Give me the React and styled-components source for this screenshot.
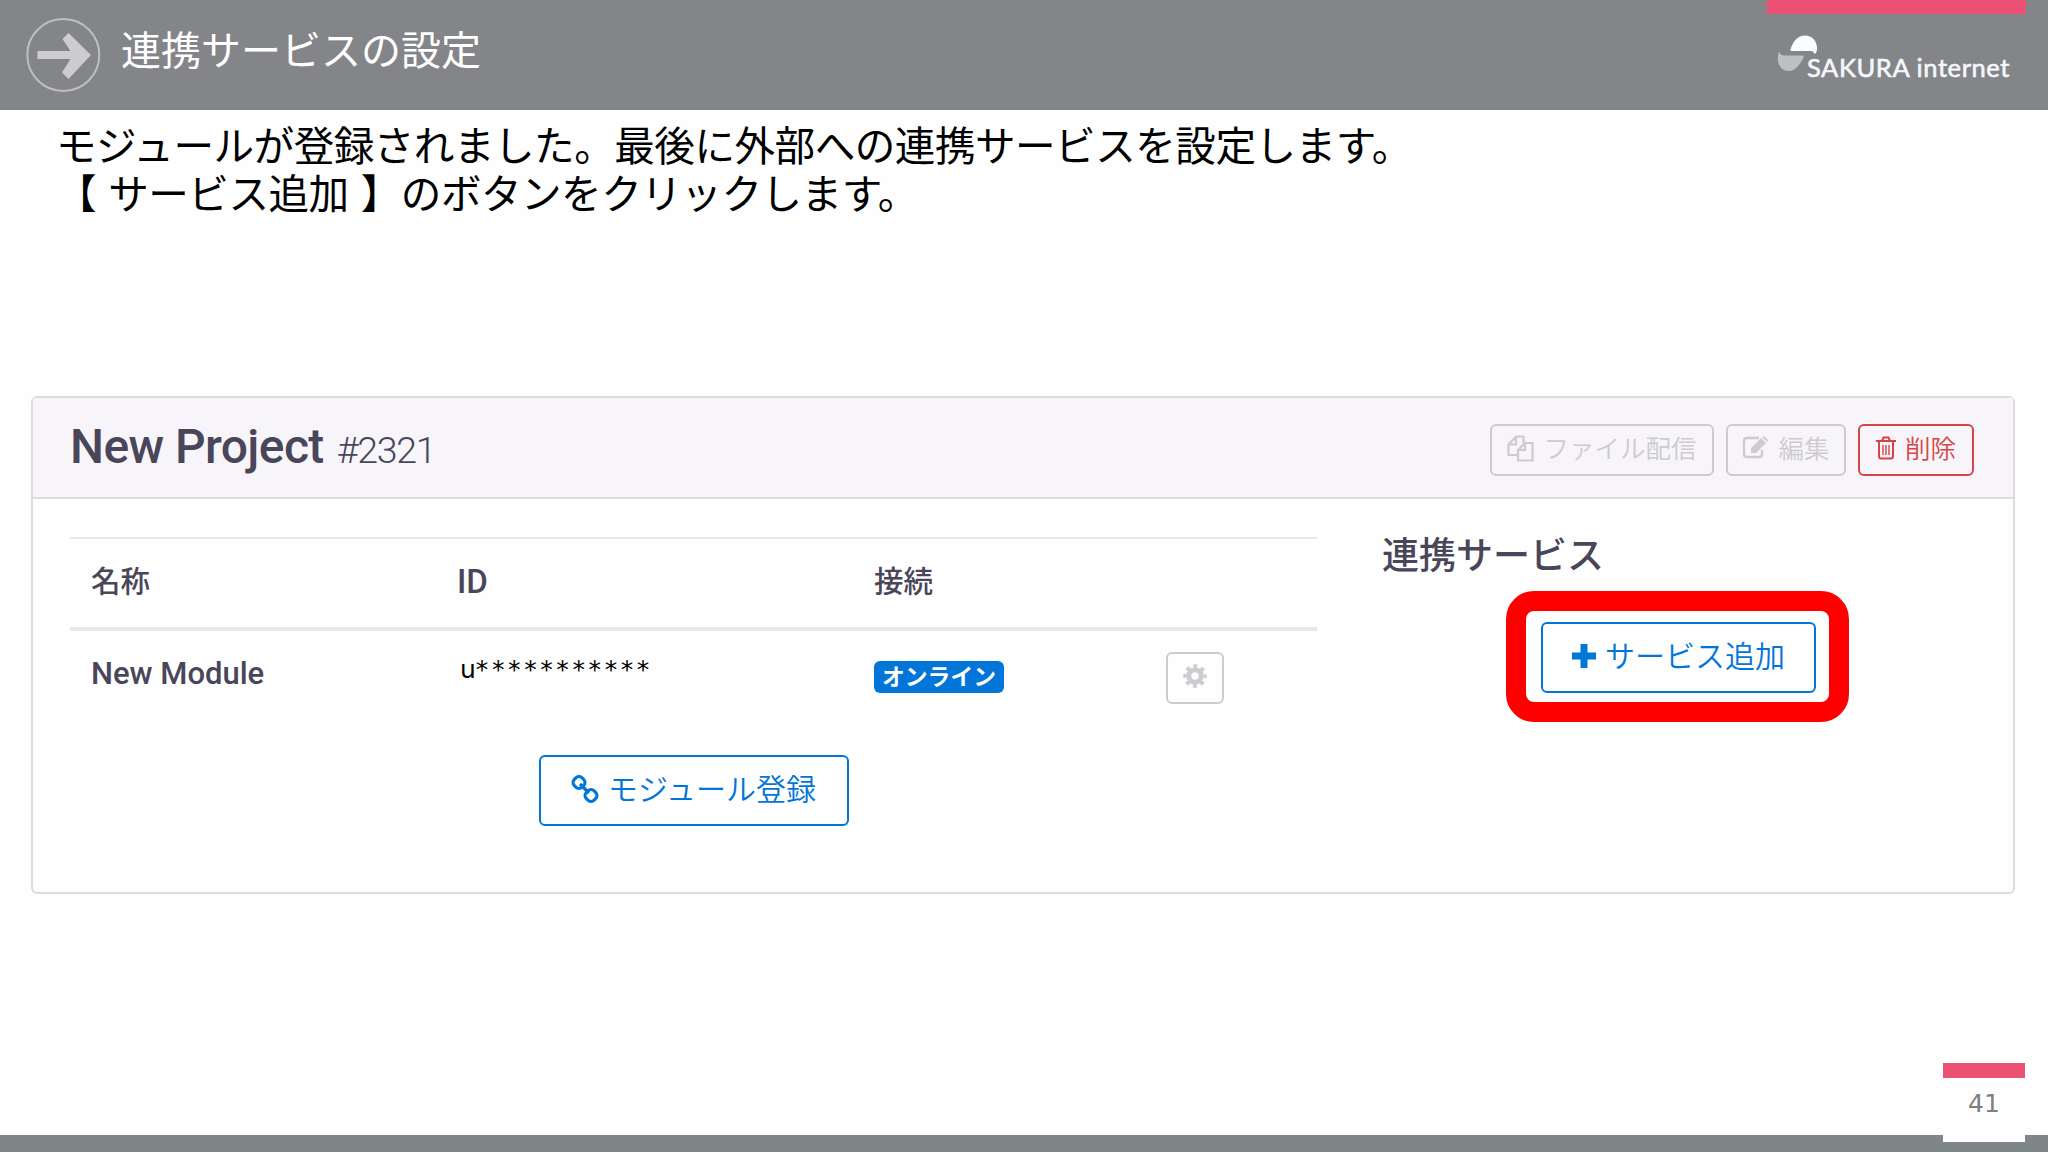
import React from "react";
import styled, { createGlobalStyle } from "styled-components";

const GlobalStyle = createGlobalStyle`
  * {
    box-sizing: border-box;
  }
  body {
    margin: 0;
    background-color: #fefefe;
    font-family: Roboto, "Noto Sans CJK JP", sans-serif;
  }
`;

const Slide = styled.div`
  display: flex;
  flex-direction: column;
  width: 2048px;
  height: 1152px;
  overflow: hidden;
`;

const TopBar = styled.header`
  display: flex;
  justify-content: space-between;
  height: 110px;
  padding: 0 22px 0 26px;
  background-color: #848589;
`;

const TitleGroup = styled.div`
  display: flex;
  svg {
    margin-top: 18px;
  }
`;

const Title = styled.h1`
  margin: 0 0 0 20px;
  font: 400 40px/97px "Noto Sans CJK JP", sans-serif;
  color: #fff;
`;

const Brand = styled.div`
  width: 259px;
  border-top: 14px solid #ea5173;
`;

const Logo = styled.div`
  display: flex;
  padding: 20px 0 0 10px;
`;

const LogoText = styled.span`
  margin: 16px 0 0 -10px;
  font: 400 25.5px/34px Lato, sans-serif;
  letter-spacing: 0.6px;
  -webkit-text-stroke: 0.6px #f4f7fc;
  white-space: nowrap;
  color: #f4f7fc;
`;

const Lead = styled.div`
  height: 286px;
  padding: 10px 0 0 56px;
  font: 400 40.6px/48px "Noto Sans CJK JP", sans-serif;
  letter-spacing: -0.5px;
  word-spacing: 3.5px;
  color: #000;
  p {
    margin: 0;
  }
`;

const Card = styled.section`
  width: 1984px;
  height: 498px;
  margin-left: 31px;
  border: 2px solid #dddbe0;
  border-radius: 6px;
`;

const CardHeader = styled.div`
  display: flex;
  justify-content: space-between;
  height: 101px;
  padding: 26px 39px 0 37px;
  border-bottom: 2px solid #dddbe0;
  background-color: #f7f5fa;
`;

const ProjectName = styled.h2`
  margin: 0;
  font-size: 48px;
  line-height: 46px;
  font-weight: 500;
  letter-spacing: -0.6px;
  color: #49465a;
`;

const ProjectNumber = styled.span`
  margin-left: 13px;
  font-size: 37.5px;
  font-weight: 300;
  letter-spacing: -1.3px;
`;

const Actions = styled.div`
  display: flex;
  gap: 12px;
`;

const colors = {
  muted: "#cdcbd0",
  danger: "#d44545",
  primary: "#0275d8",
};

const Button = styled.button`
  display: flex;
  align-items: center;
  justify-content: center;
  gap: 9px;
  width: ${(p) => p.$width}px;
  height: ${(p) => p.$height || 52}px;
  padding: 0 0 4px;
  border: 2px solid ${(p) => colors[p.$tone]};
  border-radius: 6px;
  background-color: transparent;
  font: 350 ${(p) => p.$size || 25.5}px "Noto Sans CJK JP", sans-serif;
  white-space: nowrap;
  color: ${(p) => colors[p.$tone]};
  svg {
    flex: none;
  }
`;

const ButtonLabel = styled.span`
  line-height: 36px;
  padding-bottom: 3px;
`;

const CardBody = styled.div`
  display: flex;
  padding: 38px 0 0 37px;
`;

const Modules = styled.div`
  display: flex;
  flex-direction: column;
  align-items: center;
  width: 1247px;
`;

const Row = styled.div`
  display: grid;
  grid-template-columns: 366px 417px 292px 1fr;
  align-items: center;
  width: 100%;
  height: ${(p) => p.$height}px;
  padding-left: 21px;
  border-top: ${(p) => p.$line}px solid #eae8ed;
  color: #49465a;
`;

const HeadCell = styled.span`
  padding-bottom: ${(p) => (p.$latin ? 3 : 8)}px;
  font-size: ${(p) => (p.$latin ? 33 : 29.5)}px;
  font-weight: 500;
`;

const ModuleName = styled.span`
  padding-bottom: 9px;
  font-size: 31px;
  font-weight: 500;
`;

const ModuleId = styled.span`
  padding: 0 0 17px 3px;
  font: 400 25px "DejaVu Sans", sans-serif;
  color: #000;
  i {
    font-style: normal;
    letter-spacing: 3.6px;
  }
`;

const Badge = styled.span`
  width: 130px;
  height: 32px;
  margin-bottom: 3px;
  border-radius: 6px;
  background-color: ${colors.primary};
  font: 700 22.8px/29px "Noto Sans CJK JP", sans-serif;
  text-align: center;
  color: #fff;
`;

const RegisterArea = styled.div`
  padding-top: 30px;
`;

const Services = styled.div`
  padding-left: 65px;
`;

const ServicesTitle = styled.h3`
  height: 37px;
  margin: 0;
  font: 500 37px/32px "Noto Sans CJK JP", sans-serif;
  color: #49465a;
`;

const Highlight = styled.div`
  display: flex;
  align-items: center;
  justify-content: center;
  width: 343px;
  height: 131px;
  margin: 17px 0 0 124px;
  padding: 2px 0 0 2px;
  border: 20px solid #fe0000;
  border-radius: 28px;
`;

const BottomArea = styled.footer`
  display: flex;
  flex: 1;
  align-items: flex-end;
  justify-content: flex-end;
  padding-right: 23px;
  background: linear-gradient(#7f8687, #7f8687) bottom / 100% 17px no-repeat;
`;

const PageNumber = styled.div`
  width: 82px;
  height: 79px;
  margin-bottom: 10px;
  border-top: 15px solid #ea5173;
  background-color: #fefefe;
  font: 400 25px/52px "DejaVu Sans", sans-serif;
  text-align: center;
  color: #7f7f7f;
`;

function ArrowIcon() {
  return (
    <svg width="75" height="75" viewBox="0 0 75 75" fill="none">
      <circle cx="37.300" cy="37" r="36" stroke="#bfbfc2" strokeWidth="2" />
      <path
        d="M11.500 33h33L36.500 21l6-6L65 37 42.500 61l-6.500-6.500L44.500 41h-33z"
        fill="#cdcdcf"
      />
    </svg>
  );
}

function LogoMark() {
  return (
    <svg width="40" height="38" viewBox="0 0 40 38">
      <path
        d="M13.500 15.500C16 7 21 1.500 28 1.500c8 0 12.500 7 12 13.500-.3 3-1 4.500-2.500 5-.5-2-1.500-3-3.500-3H15q-2 0-1.500-1.500z"
        fill="#fbfcff"
      />
      <path
        d="M2.500 18c1 2.500 2 3.500 4.500 3.500h18.500q2 0 1 2C23 31 18 37 12 37 4 37 .5 30 .8 24c.1-3 .5-5 1.700-6z"
        fill="#bfc0c3"
      />
    </svg>
  );
}

function FilesIcon() {
  return (
    <svg width="27" height="27" viewBox="0 0 27 27" fill="none" stroke="currentColor" strokeWidth="2.200">
      <path d="M11 20H1.500V9.500L9 1.500h7.500V8M9 1.500V9.500H1.500" />
      <path d="M11 25.500V15l7-7h7.500v17.500zM18 8v7h-7" />
    </svg>
  );
}

function EditIcon() {
  return (
    <svg width="27" height="24" viewBox="0 0 27 24" fill="none">
      <path
        d="M17 2H5Q2 2 2 5v13q0 3 3 3h12q3 0 3-3v-4"
        stroke="currentColor"
        strokeWidth="2.400"
      />
      <path d="M9 17v-5L19 2l5 5-10 10zM20 1l2-1 4 4-1 2z" fill="currentColor" />
    </svg>
  );
}

function TrashIcon() {
  return (
    <svg width="20" height="24" viewBox="0 0 20 24" fill="none" stroke="currentColor">
      <path
        d="M0 5h20M6 5l1.500-3.500h5L14 5M3 5v15q0 2.500 2 2.500h10q2 0 2-2.500V5"
        strokeWidth="2"
      />
      <path d="M7 9v10M10 9v10M13 9v10" strokeWidth="1.400" />
    </svg>
  );
}

function GearIcon() {
  return (
    <svg width="24" height="24" viewBox="0 0 24 24" fill="none" stroke="currentColor">
      <circle cx="12" cy="12" r="6.200" strokeWidth="5" />
      <circle cx="12" cy="12" r="10" strokeWidth="3.500" strokeDasharray="4 3.854" strokeDashoffset="2" />
    </svg>
  );
}

function LinkIcon() {
  return (
    <svg width="28" height="28" viewBox="0 0 28 28" fill="none" stroke="currentColor" strokeWidth="3.200">
      <rect x="2.500" y="2" width="11" height="11" rx="4.500" transform="rotate(45 8 7.500)" />
      <rect x="14.500" y="15" width="11" height="11" rx="4.500" transform="rotate(45 20 20.500)" />
      <path d="M9 9l9 9" />
    </svg>
  );
}

function PlusIcon() {
  return (
    <svg width="24" height="24" viewBox="0 0 24 24" fill="currentColor">
      <path d="M8.500 0h7v8.500H24v7h-8.500V24h-7v-8.500H0v-7h8.500z" />
    </svg>
  );
}

function App() {
  return (
    <Slide>
      <GlobalStyle />
      <TopBar>
        <TitleGroup>
          <ArrowIcon />
          <Title>連携サービスの設定</Title>
        </TitleGroup>
        <Brand>
          <Logo>
            <LogoMark />
            <LogoText>SAKURA internet</LogoText>
          </Logo>
        </Brand>
      </TopBar>
      <Lead>
        <p>モジュールが登録されました。最後に外部への連携サービスを設定します。</p>
        <p>【 サービス追加 】のボタンをクリックします。</p>
      </Lead>
      <Card>
        <CardHeader>
          <ProjectName>
            New Project<ProjectNumber>#2321</ProjectNumber>
          </ProjectName>
          <Actions>
            <Button $tone="muted" $width={224}>
              <FilesIcon />
              <ButtonLabel>ファイル配信</ButtonLabel>
            </Button>
            <Button $tone="muted" $width={120}>
              <EditIcon />
              <ButtonLabel>編集</ButtonLabel>
            </Button>
            <Button $tone="danger" $width={116}>
              <TrashIcon />
              <ButtonLabel>削除</ButtonLabel>
            </Button>
          </Actions>
        </CardHeader>
        <CardBody>
          <Modules>
            <Row $height={90} $line={2}>
              <HeadCell>名称</HeadCell>
              <HeadCell $latin>ID</HeadCell>
              <HeadCell>接続</HeadCell>
            </Row>
            <Row $height={98} $line={4}>
              <ModuleName>New Module</ModuleName>
              <ModuleId>
                u<i>***********</i>
              </ModuleId>
              <Badge>オンライン</Badge>
              <Button $tone="muted" $width={58}>
                <GearIcon />
              </Button>
            </Row>
            <RegisterArea>
              <Button $tone="primary" $width={310} $height={71} $size={30}>
                <LinkIcon />
                <ButtonLabel>モジュール登録</ButtonLabel>
              </Button>
            </RegisterArea>
          </Modules>
          <Services>
            <ServicesTitle>連携サービス</ServicesTitle>
            <Highlight>
              <Button $tone="primary" $width={275} $height={71} $size={30}>
                <PlusIcon />
                <ButtonLabel>サービス追加</ButtonLabel>
              </Button>
            </Highlight>
          </Services>
        </CardBody>
      </Card>
      <BottomArea>
        <PageNumber>41</PageNumber>
      </BottomArea>
    </Slide>
  );
}

export default App;
